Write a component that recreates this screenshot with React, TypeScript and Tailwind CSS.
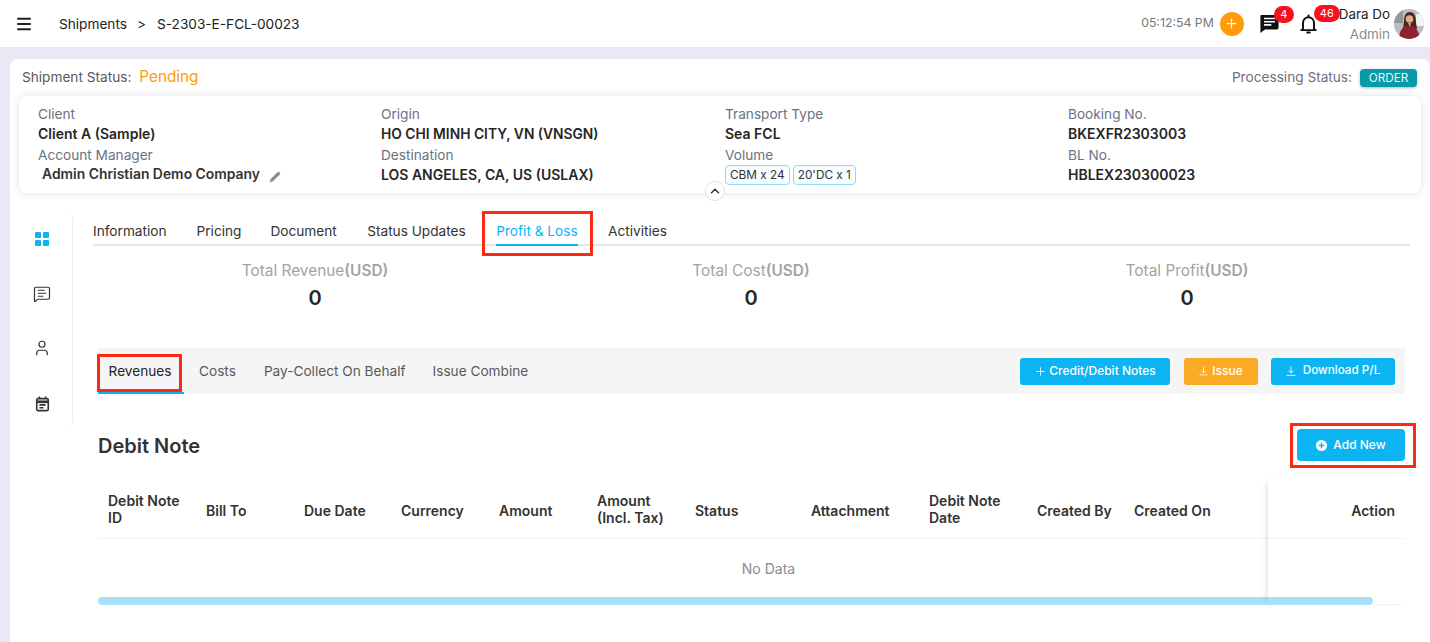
import React from "react";
import { Menu, MessageSquareText, User, ChevronUp, Plus, Pencil } from "lucide-react";

function Info({ label, value, tight }: { label: string; value: React.ReactNode; tight?: boolean }) {
  return (
    <>
      <div className="h-[20.5px] leading-[20.5px] text-[13.65px] text-[#6b7280]">{label}</div>
      <div className={tight ? "h-[20.5px] leading-[20.5px] text-[13.8px] font-semibold text-[#262626]" : "h-[20.5px] leading-[20.5px] text-[14px] font-semibold text-[#262626]"}>{value}</div>
    </>
  );
}

const cols = [
  ["Debit Note", "ID"], ["Bill To"], ["Due Date"], ["Currency"], ["Amount"], ["Amount", "(Incl. Tax)"],
  ["Status"], ["Attachment"], ["Debit Note", "Date"], ["Created By"], ["Created On"],
];

function Total({ label }: { label: string }) {
  return (
    <div className="flex flex-col items-center">
      <div className="whitespace-nowrap text-[15.4px] leading-[20px] text-[#a3a3a3]">{label}<span className="font-semibold">(USD)</span></div>
      <div className="mt-[5px] text-[20px] leading-[24px] font-semibold text-[#262626]">0</div>
    </div>
  );
}

function Tray({ className }: { className: string }) {
  return (
    <svg viewBox="0 0 12 12" fill="none" stroke="#fff" strokeWidth="1" className={className}>
      <path d="M6 0.500v7.500M3 5.500l3 3 3-3M0.500 11.200h11" />
    </svg>
  );
}

export default function App() {
  return (
    <div className="w-[1430px] h-[642px] overflow-hidden bg-[#e8e9f4] text-[#262626] [font-family:Inter,'Noto_Sans',sans-serif]">
      <header className="h-[47px] bg-white flex items-center pl-[15px] pr-[6px]">
        <Menu size={18} strokeWidth={2.700} className="text-[#222]" />
        <div className="ml-[26px] mt-[1px] flex items-center text-[13.65px] text-[#222]">
          <span>Shipments</span>
          <span className="ml-[10px]">&gt;</span>
          <span className="ml-[11px]">S-2303-E-FCL-00023</span>
        </div>
        <div className="ml-auto flex items-center">
          <span className="text-[12.3px] text-[#777] mr-[6px]">05:12:54 PM</span>
          <span className="w-[24px] h-[24px] rounded-full bg-[#ff9a0d] flex items-center justify-center mr-[15px]">
            <Plus size={15} className="text-white" strokeWidth={2} />
          </span>
          <span className="relative w-[21px] h-[20px] mr-[20px]">
            <svg viewBox="1 2 22 22" className="w-[21px] h-[20px]" fill="#111"><path d="M3 3h17a2 2 0 0 1 2 2v12a2 2 0 0 1-2 2H7l-5 4V4a1 1 0 0 1 1-1z" /><path d="M6 7h12M6 10.500h12M6 14h8" stroke="#fff" strokeWidth="1.800" /></svg>
            <span className="absolute left-[15px] top-[-8px] w-[20px] h-[17px] rounded-full bg-[#f5121d] text-white text-[11px] leading-[17px] text-center">4</span>
          </span>
          <span className="relative w-[17px] h-[20px] mr-[22px]">
            <svg viewBox="2 1 20 22" className="w-[17px] h-[20px]" fill="none" stroke="#111" strokeWidth="2.300"><path d="M5.500 18V10.500a6.500 6.500 0 0 1 13 0V18l2 1.200H3.500z" strokeLinejoin="round" /><path d="M12 1v3" /><path d="M9.500 22h5" /></svg>
            <span className="absolute left-[14px] top-[-9px] w-[26px] h-[17px] rounded-full bg-[#f5121d] text-white text-[11px] leading-[17px] text-center">46</span>
          </span>
          <div className="text-right text-[13.4px] leading-[20px] mr-[4px]">
            <div className="text-[#222]">Dara Do</div>
            <div className="text-[#8c8c8c]">Admin</div>
          </div>
          <svg viewBox="0 0 30 30" className="w-[30px] h-[30px] rounded-full">
            <rect width="30" height="30" fill="#b9bfc0" />
            <rect x="22" y="5" width="8" height="12" fill="#f2f4f4" />
            <rect x="0" y="0" width="9" height="14" fill="#8f9a98" />
            <path d="M10 13c0-7 2-10 6-10s6 4 6 10l1 7H9z" fill="#4a2620" />
            <circle cx="15.500" cy="10" r="3.800" fill="#e0ab8f" />
            <path d="M5 30c0-9 5-14 10-14s10 5 11 14z" fill="#8f2230" />
            <path d="M14 14h3l-1 4z" fill="#e0ab8f" />
          </svg>
        </div>
      </header>

      <main className="mt-[12px] ml-[10px] h-[600px] bg-white rounded-l-[8px] rounded-tr-[8px] relative">
        <div className="h-[37px] flex items-center pl-[12px] pr-[13px]">
          <span className="text-[13.65px] text-[#595959]">Shipment Status:</span>
          <span className="ml-[8px] text-[15.3px] text-[#ff9a0d] -mt-[1px]">Pending</span>
          <span className="ml-auto text-[13.65px] text-[#6b7280]">Processing Status:</span>
          <span className="ml-[8px] w-[57px] h-[18px] rounded-[4px] bg-[#089aa8] text-[#e6f7f8] text-[11.700px] leading-[18px] text-center shadow-[0_1px_3px_rgba(0,0,0,0.3)]">ORDER</span>
        </div>

        <section className="relative mx-[9px] h-[97px] rounded-[8px] bg-white shadow-[0_0_8px_rgba(0,0,0,0.12)] grid grid-cols-[343px_344px_343px_1fr] pl-[19px] pt-[7.500px]">
          <div>
            <Info label="Client" value="Client A (Sample)" />
            <div className="h-[20.500px] leading-[20.500px] text-[13.65px] text-[#6b7280]">Account Manager</div>
            <div className="flex items-center h-[18px] pl-[4px] text-[13.9px] font-semibold text-[#333]">
              Admin Christian Demo Company
              <Pencil size={12} fill="#8c8c8c" strokeWidth={1} className="text-[#8c8c8c] ml-[9px] mt-[6px]" />
            </div>
          </div>
          <div>
            <Info label="Origin" value="HO CHI MINH CITY, VN (VNSGN)" tight />
            <Info label="Destination" value="LOS ANGELES, CA, US (USLAX)" />
          </div>
          <div>
            <Info label="Transport Type" value="Sea FCL" />
            <div className="h-[20.500px] leading-[20.500px] text-[13.65px] text-[#6b7280]">Volume</div>
            <div className="flex gap-[3px]">
              <span className="h-[20px] px-[4px] rounded-[4px] border border-[#8fdcfa] bg-[#f8fdff] text-[11.800px] leading-[18px] text-[#333]">CBM x 24</span>
              <span className="h-[20px] px-[4px] rounded-[4px] border border-[#8fdcfa] bg-[#f8fdff] text-[11.800px] leading-[18px] text-[#333]">20'DC x 1</span>
            </div>
          </div>
          <div>
            <Info label="Booking No." value="BKEXFR2303003" />
            <Info label="BL No." value="HBLEX230300023" />
          </div>
          <span className="absolute left-[686px] top-[85px] w-[20px] h-[20px] rounded-full bg-white border border-[#e0e0e0] flex items-center justify-center">
            <ChevronUp size={14} strokeWidth={2.500} className="text-[#333]" />
          </span>
        </section>

        <div className="flex mt-[19px]">
          <aside className="w-[63px] h-[216px] border-r border-[#f0f0f0] rounded-r-[6px] flex flex-col items-center pt-[20px] text-[#333] shrink-0 pl-[1px]">
            <span className="grid grid-cols-2 gap-[2px] w-[14px] h-[14px]">
              <i className="bg-[#0cb4f2] rounded-[1px]" /><i className="bg-[#0cb4f2] rounded-[1px]" /><i className="bg-[#0cb4f2] rounded-[1px]" /><i className="bg-[#0cb4f2] rounded-[1px]" />
            </span>
            <MessageSquareText size={18} strokeWidth={1.600} className="mt-[39px]" />
            <User size={18} strokeWidth={1.600} className="mt-[36px]" />
            <svg viewBox="0 0 16 18" className="w-[15px] h-[16px] mt-[39px] ml-[1px]" fill="none" stroke="#333" strokeWidth="1.800">
              <rect x="1.500" y="3" width="13" height="13.500" rx="1.500" />
              <path d="M1.500 6.500h13" strokeWidth="3" />
              <path d="M4.500 0.500v3M11.500 0.500v3M4.500 10h7M4.500 13.200h4.500" />
            </svg>
          </aside>

          <div className="flex-1 min-w-0 pl-[20px] pr-[20px] relative">
            <nav className="h-[34px] border-b-2 border-[#e5e5e5] flex text-[13.65px] text-[#333] pt-[9px]">
              <span className="mr-[30px]">Information</span>
              <span className="mr-[29px]">Pricing</span>
              <span className="mr-[30.5px]">Document</span>
              <span className="mr-[30.5px]">Status Updates</span>
              <span className="text-[#0cb4f2] relative mr-[30.5px] h-[25px]">Profit &amp; Loss<i className="absolute left-0 right-0 bottom-0 h-[2px] bg-[#0cb4f2]" /></span>
              <span>Activities</span>
            </nav>
            <div className="grid grid-cols-[436px_436px_436px] h-[102px] pt-[15px] pl-[4px]">
              <Total label="Total Revenue" />
              <Total label="Total Cost" />
              <Total label="Total Profit" />
            </div>

            <div className="ml-[5px] mr-[5px] h-[46px] bg-[#f5f5f5] flex text-[13.65px] text-[#595959]">
              <span className="relative w-[86px] h-[46px] flex items-center justify-center pr-[2px] text-[#262626]">Revenues<i className="absolute left-0 right-0 bottom-0 h-[2px] bg-[#0cb4f2]" /></span>
              <span className="ml-[15px] h-[46px] flex items-center">Costs</span>
              <span className="ml-[28px] h-[46px] flex items-center">Pay-Collect On Behalf</span>
              <span className="ml-[27px] h-[46px] flex items-center">Issue Combine</span>
              <div className="ml-auto flex items-center pr-[10px] text-white text-[12px] font-medium">
                <span className="w-[150px] h-[27px] rounded-[3px] bg-[#0cb4f2] flex items-center justify-center gap-[2px]"><Plus size={13} strokeWidth={1.500} />Credit/Debit Notes</span>
                <span className="ml-[14px] w-[74px] h-[27px] rounded-[3px] bg-[#fbaa26] flex items-center justify-center gap-[4px]"><Tray className="w-[9px] h-[10px]" />Issue</span>
                <span className="ml-[13px] w-[124px] h-[27px] rounded-[3px] bg-[#0cb4f2] flex items-center justify-center gap-[7px]"><Tray className="w-[10px] h-[10px]" /><span className="text-[11.7px]">Download P/L</span></span>
              </div>
            </div>

            <div className="ml-[5px] mr-[5px] mt-[33px] h-[36px] flex items-center justify-between">
              <h2 className="text-[20px] font-semibold text-[#333] pt-[1px]">Debit Note</h2>
              <span className="w-[108px] h-[32px] rounded-[4px] bg-[#0cb4f2] text-white text-[12px] font-medium flex items-center justify-center gap-[6px]">
                <svg viewBox="0 0 12 12" className="w-[11px] h-[11px]"><circle cx="6" cy="6" r="6" fill="#fff" /><path d="M6 3v6M3 6h6" stroke="#0cb4f2" strokeWidth="1.500" /></svg>
                Add New
              </span>
            </div>

            <div className="ml-[5px] mr-[5px] mt-[18px] relative h-[124px]">
              <div className="grid grid-cols-[98px_98px_97px_98px_98px_98px_116px_118px_108px_97px_1fr] h-[58px] items-center border-b border-[#f2f2f6] pl-[10px] pr-[10px] text-[14px] leading-[17px] font-semibold text-[#333]">
                {cols.map((c) => (
                  <div key={c[0] + (c[1] || "")} className={c.length === 1 ? "mt-[2px]" : "-mt-[1px]"}>{c.map((t) => <div key={t}>{t}</div>)}</div>
                ))}
              </div>
              <div className="h-[58px] flex items-center justify-center pl-[34px] text-[14px] text-[#8c8c8c]">No Data</div>
              <div className="relative h-[8px]">
                <div className="absolute left-0 right-[32px] top-0 h-[8px] rounded-full bg-[#abdff8]" />
                <div className="absolute left-[1275px] right-[4px] bottom-[0px] h-[1px] bg-[#f2f2f6]" />
              </div>
              <div className="absolute top-[-2px] bottom-0 left-[1170px] right-0 shadow-[-5px_0_6px_-4px_rgba(0,0,0,0.14)] pointer-events-none">
                <span className="absolute right-[10px] top-[23px] text-[14px] leading-[17px] font-semibold text-[#333]">Action</span>
              </div>
            </div>

            <i className="absolute left-[409px] top-[-1px] w-[111px] h-[45px] border-[3px] border-[#fb2a10]" />
            <i className="absolute left-[24px] top-[142px] w-[85px] h-[38px] border-[3px] border-[#fb2a10]" />
            <i className="absolute left-[1217px] top-[211px] w-[126px] h-[45px] border-[3px] border-[#fb2a10]" />
          </div>
        </div>
      </main>
    </div>
  );
}
